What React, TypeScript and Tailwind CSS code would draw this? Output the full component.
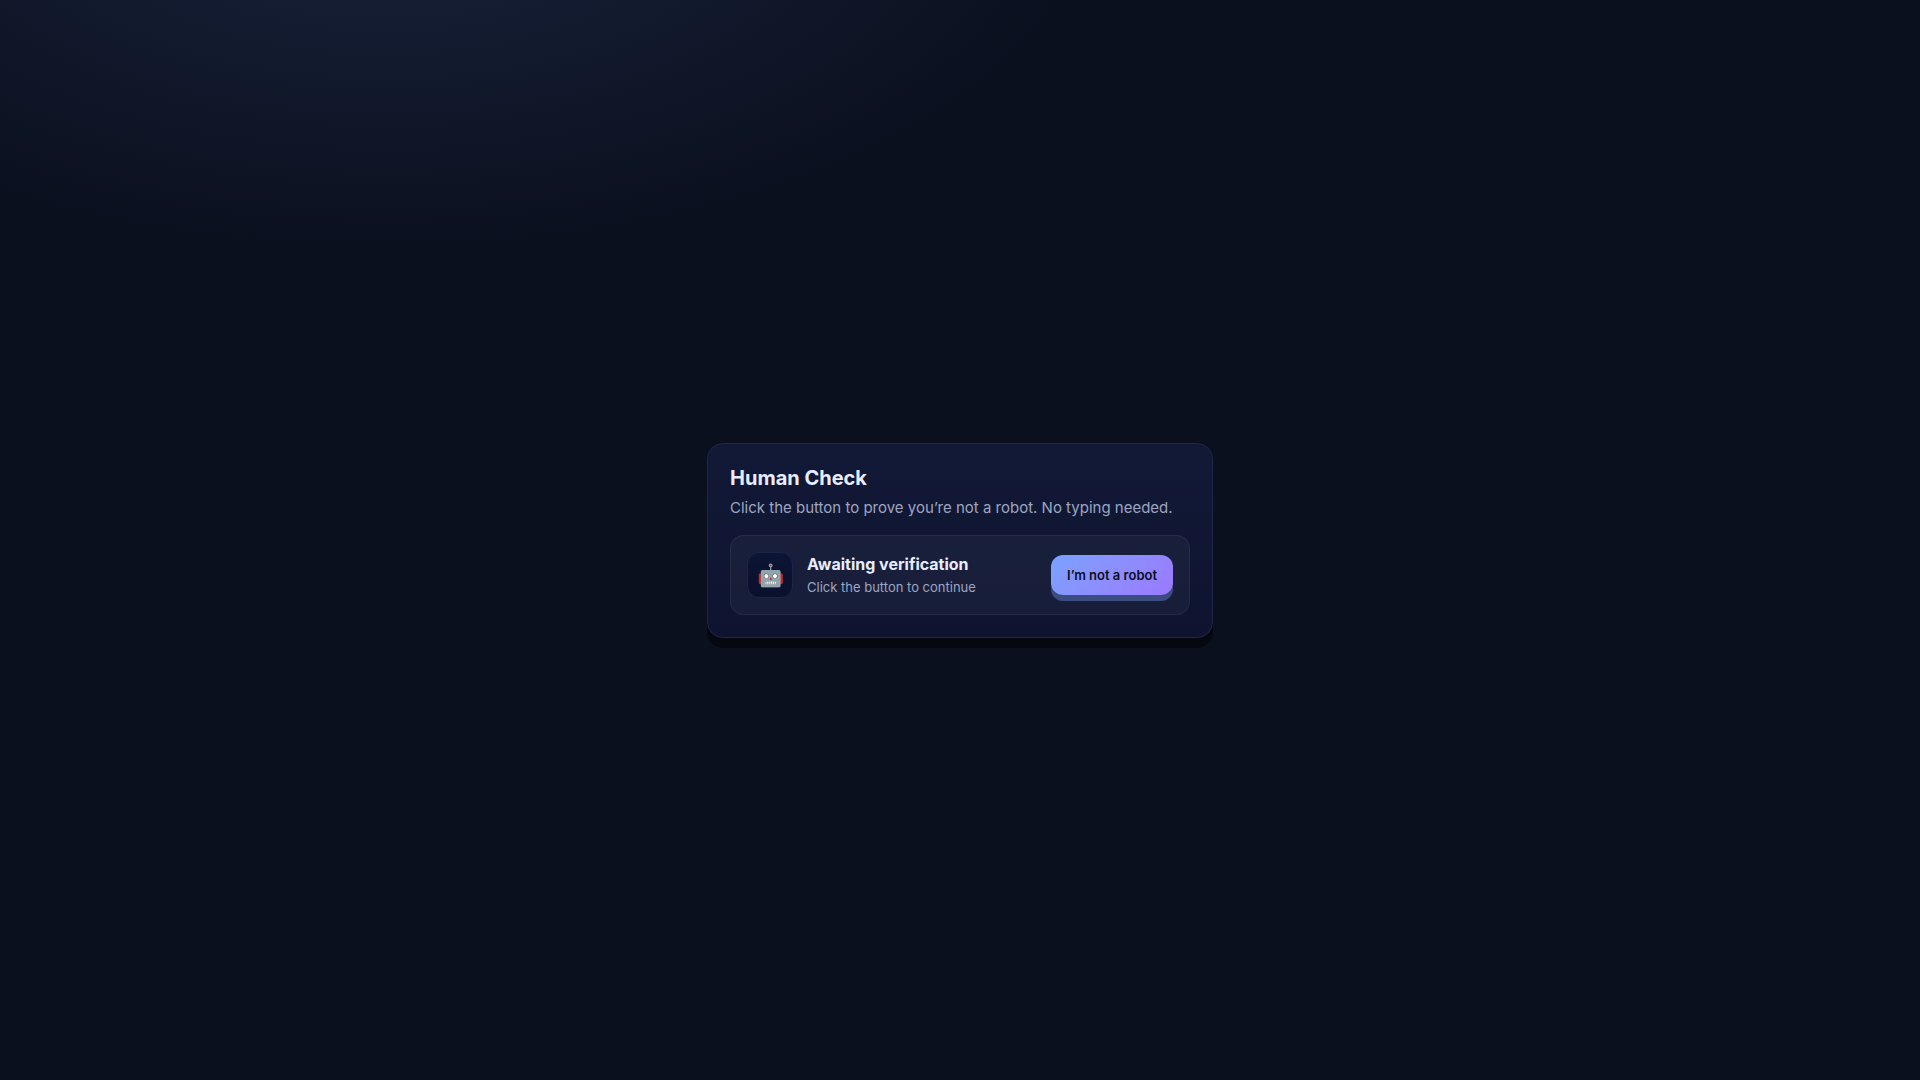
export default function App() {
  return (
    <main className="grid min-h-screen place-items-center bg-[#0a101e] bg-[radial-gradient(1200px_600px_at_20%_-10%,#19233c,transparent_60%)] p-6 font-['Inter',sans-serif] text-[#e8ecff]">
      <section className="w-full max-w-[506px] rounded-2xl border border-[#1f2648] bg-linear-to-b from-[#121936] to-[#0e1430] p-[22px] shadow-[0_10px_0_rgba(0,0,0,0.5)]">
        <h1 className="mb-1.5 text-xl leading-6 font-bold">Human Check</h1>
        <p className="mb-[15px] text-[15px] leading-6 text-[#9ea6c2]">Click the button to prove you’re not a robot. No typing needed.</p>
        <div className="flex items-center gap-3.5 rounded-[14px] border border-white/6 bg-white/4 p-4">
          <div aria-hidden="true" className="grid size-[46px] place-items-center rounded-xl border border-[#1d2445] bg-linear-to-b from-[#0d1535] to-[#0a102c] text-[22px] leading-[34px]">🤖</div>
          <div className="flex-1">
            <h2 className="text-base leading-6 font-bold">Awaiting verification</h2>
            <p className="text-[13px] leading-[22px] text-[#9ea6c2]">Click the button to continue</p>
          </div>
          <button type="button" className="rounded-xl bg-linear-135 from-[#7aa2ff] to-[#9b78ff] px-4 py-3 text-[13px] leading-4 font-semibold text-[#0a0f1d] shadow-[0_6px_0_#3b4d80]">I’m not a robot</button>
        </div>
      </section>
    </main>
  );
}
